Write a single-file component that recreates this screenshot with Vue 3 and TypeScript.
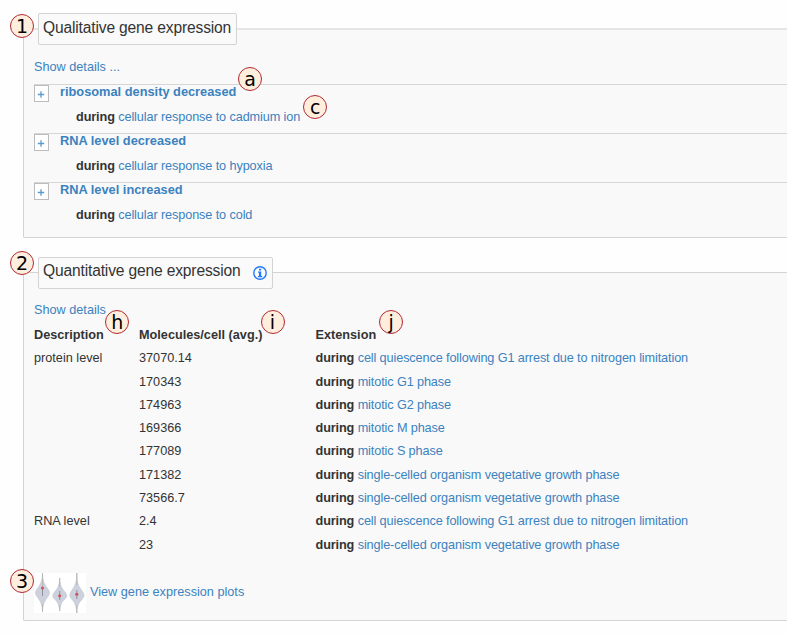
<script setup lang="ts">
interface QualitativeRow {
  term: string
  during: string
}

interface QuantitativeRow {
  description: string
  value: string
  extension: string
}

interface Marker {
  label: string
  x: number
  y: number
}

const qualitative: QualitativeRow[] = [
  { term: 'ribosomal density decreased', during: 'cellular response to cadmium ion' },
  { term: 'RNA level decreased', during: 'cellular response to hypoxia' },
  { term: 'RNA level increased', during: 'cellular response to cold' },
]

const quiescence = 'cell quiescence following G1 arrest due to nitrogen limitation'
const growth = 'single-celled organism vegetative growth phase'

const quantitative: QuantitativeRow[] = [
  { description: 'protein level', value: '37070.14', extension: quiescence },
  { description: '', value: '170343', extension: 'mitotic G1 phase' },
  { description: '', value: '174963', extension: 'mitotic G2 phase' },
  { description: '', value: '169366', extension: 'mitotic M phase' },
  { description: '', value: '177089', extension: 'mitotic S phase' },
  { description: '', value: '171382', extension: growth },
  { description: '', value: '73566.7', extension: growth },
  { description: 'RNA level', value: '2.4', extension: quiescence },
  { description: '', value: '23', extension: growth },
]

const markers: Marker[] = [
  { label: '1', x: 22, y: 26 },
  { label: 'a', x: 250, y: 79 },
  { label: 'c', x: 315.3, y: 107.3 },
  { label: '2', x: 22, y: 262.7 },
  { label: 'h', x: 117.3, y: 322.3 },
  { label: 'i', x: 272.5, y: 322.3 },
  { label: 'j', x: 391.2, y: 322.3 },
  { label: '3', x: 22, y: 581.2 },
]
</script>

<template>
  <main class="page">
    <section class="panel qualitative">
      <h2 class="legend">Qualitative gene expression</h2>
      <a class="details">Show details ...</a>
      <ul class="terms">
        <li v-for="row in qualitative" :key="row.term" class="term">
          <button class="expand" type="button">
            <svg viewBox="0 0 15 17" width="15" height="17">
              <path d="M3.800 9.500h6.400M7 6.300v6.400" stroke="#5c9acb" stroke-width="1.300" fill="none" />
            </svg>
          </button>
          <div class="term-body">
            <a class="term-name">{{ row.term }}</a>
            <div class="term-ext"><b>during</b> <a>{{ row.during }}</a></div>
          </div>
        </li>
      </ul>
    </section>

    <section class="panel quantitative">
      <h2 class="legend">
        <span>Quantitative gene expression</span>
        <svg class="info" viewBox="0 0 14 14" width="14" height="14">
          <circle cx="7" cy="7" r="6.2" fill="#fdfdff" stroke="#2378f7" stroke-width="1.4" />
          <path d="M6 2.700h2.200v1.900H6zM5 5.600H8.200v4.400h1.100v1.200H4.900V10H6V6.700H5z" fill="#2378f7" />
        </svg>
      </h2>
      <a class="details">Show details</a>
      <div class="grid head">
        <span>Description</span>
        <span>Molecules/cell (avg.)</span>
        <span>Extension</span>
      </div>
      <div v-for="(row, n) in quantitative" :key="n" class="grid">
        <span>{{ row.description }}</span>
        <span>{{ row.value }}</span>
        <span class="ext"><b>during</b> <a>{{ row.extension }}</a></span>
      </div>
      <div class="plots">
        <svg class="violins" viewBox="0 0 52 40" width="52" height="40">
          <rect width="52" height="40" fill="#fff" />
          <g fill="#cdd1dd" stroke="#bcc0cb" stroke-width=".5">
            <path d="M8.500 0C8.700 7 10 10 12.500 14C16.500 19 16.500 20 13 25C10 29 9 32 8.500 39C8 32 7 29 4 25C.5 20 .5 19 4.500 14C7 10 8.300 7 8.500 0Z" />
            <path d="M25.700 5C26 12 27.500 15 31 19C34 23 33 24 30 27C27 30 26.500 32 25.700 38C25 32 24 30 21.500 27C18 24 18 23 20.500 19C24 15 25.400 12 25.700 5Z" />
            <path d="M42.800 0C43 10 44 12 47.500 17C51 22 51 23 47.500 27C44 31 43.500 33 42.800 40C42 33 41.500 31 38.500 27C35 23 35 22 38 17C41.500 12 42.500 10 42.800 0Z" />
          </g>
          <path d="M8.500 0v14M8.500 31v8M25.700 5v9M25.700 32v6M42.800 0v12M42.800 32v8" stroke="#b8b8b8" stroke-width="1" />
          <path d="M8.500 14v9M25.700 18v9M42.800 17v9" stroke="#92929a" stroke-width="1" />
          <g fill="#c65356">
            <circle cx="8.500" cy="15" r="1.500" />
            <circle cx="25.700" cy="22.700" r="1.500" />
            <circle cx="42.800" cy="21.300" r="1.500" />
          </g>
        </svg>
        <a>View gene expression plots</a>
      </div>
    </section>

    <span
      v-for="m in markers"
      :key="m.label"
      class="marker"
      :style="{ left: m.x + 'px', top: m.y + 'px' }"
    >{{ m.label }}</span>
  </main>
</template>

<style>
body {
  margin: 0;
  background: #fefefe;
}
</style>

<style scoped>
.page {
  position: relative;
  box-sizing: border-box;
  width: 787px;
  height: 636px;
  padding: 28px 0 0 23px;
  overflow: hidden;
  font-family: "Liberation Sans", Arial, sans-serif;
  font-size: 12.7px;
  line-height: 20px;
  color: #333;
  white-space: nowrap;
}

.panel {
  box-sizing: border-box;
  padding-left: 10px;
  border: 1px solid #d3d3d3;
  border-right: 0;
  border-radius: 2px 0 0 2px;
  background: #f9f9f9;
}

.qualitative {
  height: 210px;
  border-top: 2px solid #e6e6e6;
}

.quantitative {
  height: 349px;
  margin-top: 34px;
}

.legend {
  display: flex;
  align-items: center;
  box-sizing: border-box;
  width: 199px;
  height: 32px;
  margin: -17px 0 0 4px;
  padding: 0 0 2px 4px;
  border: 1px solid #d3d3d3;
  border-radius: 2px;
  background: #fafafa;
  font-size: 15.6px;
  font-weight: 400;
  letter-spacing: -0.16px;
}

.quantitative .legend {
  width: 235px;
  margin-top: -16px;
  padding-bottom: 4px;
}

.info {
  margin: 3px 0 0 12px;
}

a {
  color: #3b82bf;
}

.details {
  display: block;
  margin-top: 12px;
}

.quantitative .details {
  margin-top: 11px;
}

.terms {
  margin: 7px 0 0;
  padding: 0;
  list-style: none;
}

.term {
  display: flex;
  box-sizing: border-box;
  height: 49px;
  border-top: 1px solid #d6d6d6;
}

.expand {
  box-sizing: border-box;
  width: 15px;
  height: 17px;
  padding: 0;
  border: 1px solid #bcbcbc;
  background: #fff;
}

.expand svg {
  display: block;
  margin: -1px;
}

.term-body {
  padding-left: 11px;
}

.term-name {
  display: block;
  height: 22px;
  margin-top: -3px;
  font-weight: 700;
  font-size: 12.8px;
}

.term-ext {
  padding: 3px 0 0 16px;
  letter-spacing: -0.11px;
}

.ext {
  letter-spacing: -0.12px;
}

.grid {
  display: grid;
  grid-template-columns: 105px 176.5px 1fr;
  height: 23.3px;
  line-height: 23.3px;
}

.head {
  margin-top: 4px;
  font-weight: 700;
}

.plots {
  display: flex;
  gap: 4px;
  margin-top: 16px;
  line-height: 38px;
}

.marker {
  position: absolute;
  box-sizing: border-box;
  width: 24px;
  height: 24px;
  border: 1px solid #b12831;
  border-radius: 50%;
  background: #ffeedd;
  color: #000;
  font: 19px/22px "DejaVu Sans", sans-serif;
  text-align: center;
  transform: translate(-50%, -50%);
}
</style>
